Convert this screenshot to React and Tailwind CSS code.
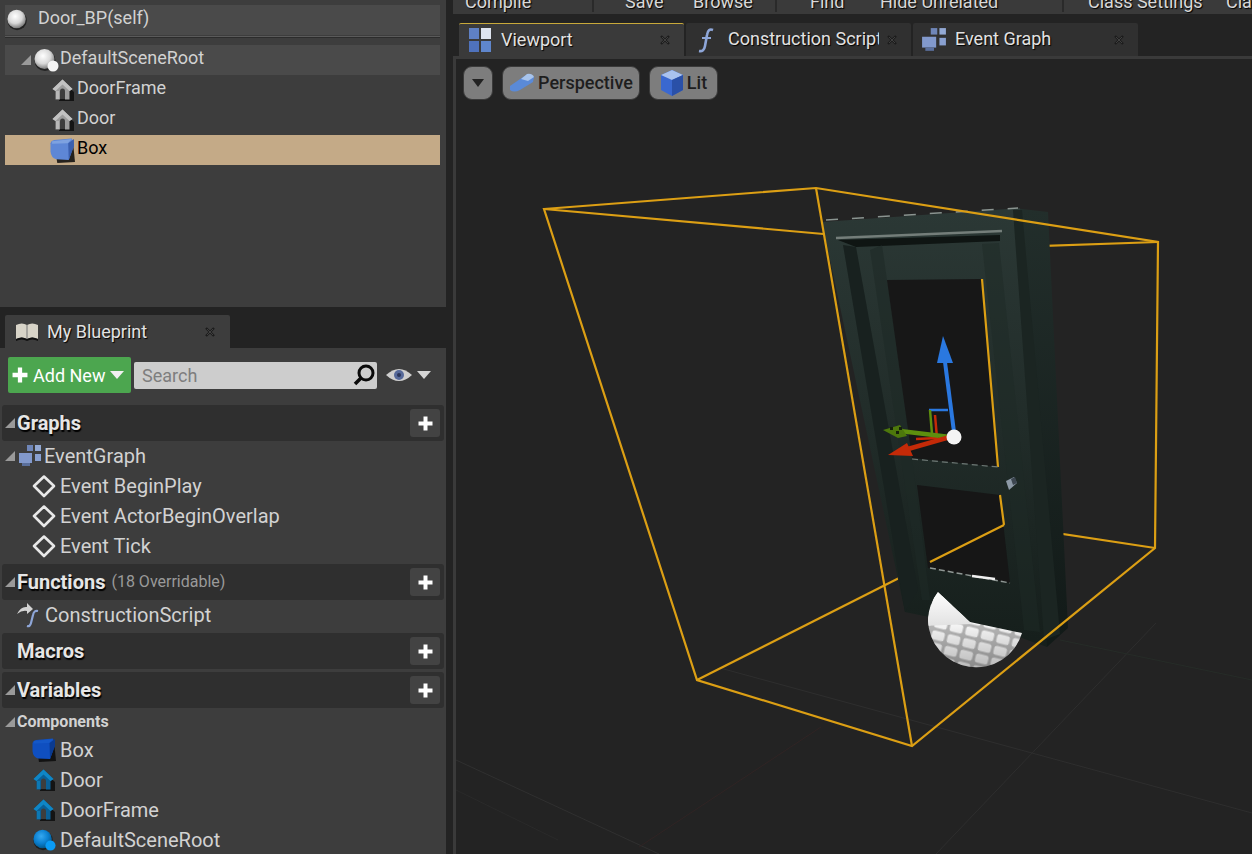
import React from "react";

const Caret = ({ className = "" }) => (
  <svg width="12" height="12" viewBox="0 0 12 12" className={"shrink-0 " + className}>
    <path d="M11 1 V11 H1 Z" fill="#9a9a9a" />
  </svg>
);

const Sphere = ({ size = 26, id = "sph", small = false, blue = false }) => (
  <svg width={size} height={size} viewBox="0 0 26 26" className="shrink-0">
    <defs>
      <radialGradient id={id} cx="0.42" cy="0.35" r="0.7">
        <stop offset="0" stopColor={blue ? "#35a8f0" : "#ffffff"} />
        <stop offset="0.55" stopColor={blue ? "#0a7fd0" : "#d8d8d8"} />
        <stop offset="1" stopColor={blue ? "#04527f" : "#6a6a6a"} />
      </radialGradient>
    </defs>
    <circle cx="12" cy="13.5" r="10.5" fill="#111" opacity="0.7" />
    <circle cx="11.5" cy="12" r="10" fill={`url(#${id})`} />
    {small && <circle cx="20" cy="19" r="5.5" fill={blue ? "#0a9bf5" : "#f4f4f4"} />}
  </svg>
);

const House = ({ blue = false }) => (
  <svg width="24" height="24" viewBox="0 0 24 24" className="shrink-0">
    <path d="M14 6 L23 14 V23 H8 V21 H17 Z" fill="#0a0a0a" opacity="0.8" />
    <path
      d="M11.5 1.5 L21.5 11 L18.5 13 V21.5 H14 V13.5 Q14 10.5 11.5 10.5 Q9 10.5 9 13.5 V21.5 H4.5 V13 L1.5 11 Z"
      fill={blue ? "#0a5f96" : "#9c9c9c"}
    />
    <path d="M11.5 1.5 L1.5 11 L4.5 13 L11.5 6.5 L18.5 13 L21.5 11 Z" fill={blue ? "#0f86c6" : "#c2c2c2"} />
    <path d="M5 13 H8 V21 H5 Z" fill={blue ? "#0d78b4" : "#b8b8b8"} />
  </svg>
);

const Cube = ({ size = 24, top = "#7ea2e0", left = "#5e87d6", right = "#3a5fae" }) => (
  <svg width={size} height={size} viewBox="0 0 24 24" className="shrink-0">
    <path d="M4 6 L22 3 L24 23 L7 24 Z" fill="#0a0a0a" opacity="0.85" />
    <path d="M0.5 5 Q1 2.5 4 2 L21 0.5 L23 7 L18 21 L6 20.5 Q1 19 0.5 13 Z" fill={left} />
    <path d="M17.5 5 L23 1 L23 8 L18 21 Z" fill={right} />
    <path d="M2 3 L21 1 L17 5 L2 5.5 Z" fill={top} />
  </svg>
);

const GraphIcon = ({ size = 24 }) => (
  <svg width={size} height={size} viewBox="0 0 24 24" className="shrink-0">
    <rect x="9" y="1" width="6" height="6" fill="#6f86b8" />
    <rect x="17" y="1" width="6" height="6" fill="#93a9d4" />
    <rect x="1" y="9" width="13" height="10" fill="#8299cc" />
    <rect x="17" y="10" width="6" height="7" fill="#89a0d0" />
    <rect x="4" y="19" width="8" height="3" fill="#5a6f9c" />
  </svg>
);

const EventIcon = () => (
  <svg width="24" height="24" viewBox="0 0 24 24" className="shrink-0">
    <path d="M12 2.5 L22 12 L12 22 L2 12 Z" fill="none" stroke="#e8e8e8" strokeWidth="2.6" strokeLinejoin="round" />
  </svg>
);

const Plus = ({ size = 15 }) => (
  <svg width={size} height={size} viewBox="0 0 15 15" className="shrink-0">
    <path d="M5.5 0.5 H9.5 V5.5 H14.5 V9.5 H9.5 V14.5 H5.5 V9.5 H0.5 V5.5 H5.5 Z" fill="#fff" />
  </svg>
);

const CloseX = () => (
  <svg width="10" height="10" viewBox="0 0 10 10" className="shrink-0">
    <path d="M1 1 L9 9 M9 1 L1 9" stroke="#1c1c1c" strokeWidth="2.4" />
    <path d="M2 2 L8 8 M8 2 L2 8" stroke="#4a4a4a" strokeWidth="0.8" />
  </svg>
);

const FuncGlyph = () => (
  <svg width="24" height="28" viewBox="0 0 24 28" className="shrink-0">
    <path d="M18 4 Q13 2 12 9 L10 20 Q9 26 4 25" fill="none" stroke="#8ea6d8" strokeWidth="2.6" />
    <path d="M7 12 H16" stroke="#8ea6d8" strokeWidth="2" />
  </svg>
);

function TreeRow({ icon, label, indent = 0, selected = false, highlight = false, gap = "gap-1", small = false }) {
  return (
    <div
      className={`flex h-[30px] items-center ${gap} ${small ? "text-[18px]" : "text-[20px]"} ${
        selected ? "bg-[#c4aa87] text-black" : highlight ? "bg-[#4a4a4a] text-[#d2d2d2]" : "text-[#d2d2d2]"
      }`}
      style={{ paddingLeft: indent }}
    >
      {icon}
      <span className={small ? "-translate-y-[3px]" : ""}>{label}</span>
    </div>
  );
}

function SectionHeader({ label, caret = true, extra, mt = "mt-[3px]" }) {
  return (
    <div className={`mx-[2px] ${mt} flex h-[36px] items-center rounded-[3px] bg-[#2f2f2f] pl-[2px] pr-[4px]`}>
      <div className="w-[13px]">{caret && <Caret />}</div>
      <span className="text-[20px] font-bold text-[#e6e6e6] [text-shadow:1px_2px_1px_#000]">{label}</span>
      {extra && <span className="ml-[6px] text-[16px] text-[#9a9a9a]">{extra}</span>}
      <button className="ml-auto flex h-[28px] w-[30px] items-center justify-center rounded-[3px] bg-[#434343]">
        <Plus />
      </button>
    </div>
  );
}

function Tab({ icon, label, active = false, clip = false }) {
  return (
    <div
      className={`flex h-[33px] w-[225px] items-center rounded-t-[2px] pr-[14px] ${
        active ? "border-t border-[#c8a93a] bg-[#3a3a3a]" : "bg-[#303030]"
      }`}
    >
      <div className="flex w-[42px] shrink-0 justify-center">{icon}</div>
      <span
        className={`-translate-y-[1px] text-[18px] text-[#e2e2e2] [text-shadow:1px_1px_1px_#000] ${
          clip ? "w-[151px] overflow-hidden whitespace-nowrap" : ""
        }`}
      >
        {label}
      </span>
      <div className="ml-auto">
        <CloseX />
      </div>
    </div>
  );
}

function ToolbarItem({ label, w }) {
  return (
    <span className={`${w} relative -top-[2px] shrink-0 whitespace-nowrap text-[18px] leading-[16px] text-[#d8d8d8] [text-shadow:1px_1px_1px_#000]`}>
      {label}
    </span>
  );
}

function Viewport() {
  const orange = "#dc9f14";
  return (
    <svg viewBox="456 59 796 795" className="absolute inset-0 h-full w-full">
      <defs>
        <pattern id="tiles" width="16" height="12" patternUnits="userSpaceOnUse" patternTransform="rotate(14)">
          <rect width="16" height="12" fill="#b4b4b4" />
          <rect x="1.5" y="1.5" width="13" height="9" rx="2.5" fill="#f4f4f4" />
        </pattern>
        <clipPath id="ball">
          <path d="M938 592 L970 622 L1022 633 A48 48 0 0 1 928 620 A48 48 0 0 1 938 592 Z" />
        </clipPath>
        <linearGradient id="ballTop" x1="0" y1="0" x2="0" y2="1">
          <stop offset="0" stopColor="#fff" />
          <stop offset="1" stopColor="#e2e2e2" />
        </linearGradient>
        <linearGradient id="ballShade" x1="0" y1="625" x2="0" y2="670" gradientUnits="userSpaceOnUse">
          <stop offset="0" stopColor="#000" stopOpacity="0" />
          <stop offset="1" stopColor="#000" stopOpacity="0.25" />
        </linearGradient>
        <linearGradient id="doorFace" x1="0" y1="210" x2="0" y2="640" gradientUnits="userSpaceOnUse">
          <stop offset="0" stopColor="#2b3835" />
          <stop offset="0.5" stopColor="#212c29" />
          <stop offset="1" stopColor="#161f1c" />
        </linearGradient>
        <linearGradient id="doorSide" x1="0" y1="210" x2="0" y2="640" gradientUnits="userSpaceOnUse">
          <stop offset="0" stopColor="#222e2b" />
          <stop offset="1" stopColor="#121a18" />
        </linearGradient>
      </defs>

      {/* floor grid */}
      <g strokeWidth="1" fill="none">
        <path d="M720 668 L1252 813" stroke="#2e2e2e" />
        <path d="M1156 623 L936 854" stroke="#2e2e2e" />
        <path d="M456 760 L659 854" stroke="#303030" />
        <path d="M456 790 L558 840" stroke="#2a2a2a" />
        <path d="M821 727 L639 847" stroke="#302424" />
        <path d="M1060 640 L1252 680" stroke="#262c28" />
      </g>

      {/* hidden edges of the box, behind the door */}
      <g stroke={orange} strokeWidth="2.2" fill="none">
        <path d="M544 209 L980 248 L1158 242" />
        <path d="M1004 525 L1155 548" />
        <path d="M1004 525 L697 680" />
      </g>

      {/* door frame */}
      <path d="M1013 208 L1048 212 L1068 628 L1047 647 L1010 620 Z" fill="url(#doorSide)" />
      <path d="M822 222 L1020 208 L1046 630 L1047 647 L1010 634 L905 612 Z" fill="url(#doorFace)" />
      <path d="M826 220 L1018 208" stroke="#8a9490" strokeWidth="1.5" strokeDasharray="12 14" />
      <path d="M836 238 L1002 231" stroke="#747e7a" strokeWidth="2.5" />
      <path d="M838 240 L1000 235 L1000 241 L856 247 Z" fill="#0f1513" />
      <path d="M843 245 L856 247 L918 590 L905 612 Z" fill="#18211f" />
      <path d="M882 245 L887 280 L912 458 L930 600 L922 600 L870 250 Z" fill="#1e2926" opacity="0.6" />
      <path d="M982 244 L999 243 L1040 632 L1024 630 Z" fill="#1e2926" opacity="0.5" />
      <path d="M1013 210 L1022 210 L1060 634 L1044 640 Z" fill="#1b2522" />

      {/* door windows */}
      <path d="M887 280 L982 279 L998 467 L912 458 Z" fill="#171717" />
      <path d="M917 485 L1000 495 L1010 583 L928 568 Z" fill="#161616" />
      <path d="M982 279 L998 467 M1000 495 L1004 525" stroke={orange} strokeWidth="2.2" fill="none" />
      <path d="M1004 525 L930 562" stroke={orange} strokeWidth="2.2" fill="none" />
      <path d="M930 568 L1010 583" stroke="#8f9794" strokeWidth="1.5" strokeDasharray="6 3" />
      <path d="M972 576 L995 579" stroke="#f0f0f0" strokeWidth="2.5" />
      <path d="M912 459 L998 467" stroke="#6f7976" strokeWidth="1.2" strokeDasharray="6 4" />
      <path d="M1006 481 L1014 477 L1017 483 L1009 490 Z" fill="#8d99a6" />
      <path d="M1011 479 L1015 477 L1017 483 L1013 485 Z" fill="#3d4650" />

      {/* sphere */}
      <g clipPath="url(#ball)">
        <rect x="920" y="585" width="110" height="90" fill="url(#tiles)" />
        <path d="M936 590 L972 624 L925 626 Z" fill="url(#ballTop)" />
        <rect x="920" y="625" width="110" height="50" fill="url(#ballShade)" />
      </g>

      {/* box edges in front */}
      <g stroke={orange} strokeWidth="2.2" fill="none" strokeLinejoin="miter">
        <path d="M544 209 L816 188 L1158 242 L1155 548 L912 746 L697 680 Z" />
        <path d="M816 188 L912 746" />
      </g>

      {/* gizmo */}
      <path d="M929 410 H948" stroke="#2a78e0" strokeWidth="2.5" />
      <path d="M930 410 L932 434" stroke="#5d8f0e" strokeWidth="2.5" />
      <path d="M935 415 L937 438 L916 439" stroke="#c42a08" strokeWidth="2.5" fill="none" />
      <path d="M945 362 L954 432" stroke="#2a78e0" strokeWidth="4" />
      <path d="M943 336 L953 363 L937 363 Z" fill="#2a78e0" />
      <path d="M950 437 L900 431" stroke="#5d8f0e" strokeWidth="4.5" />
      <path d="M883 430 L900 425 L907 436 L898 438 Z" fill="#4d780c" />
      <path d="M890 427 h3 v3 h-3z M896 431 h3 v3 h-3z M899 427 h3 v3 h-3z" fill="#15200a" />
      <path d="M950 437 L908 449" stroke="#c42a08" strokeWidth="4.5" />
      <path d="M888 455 L907 443 L913 456 Z" fill="#c42a08" />
      <circle cx="954" cy="437" r="7.5" fill="#f4f4f4" />
    </svg>
  );
}

function ViewButton({ icon, label, w }) {
  return (
    <div className={`flex h-[34px] ${w} shrink-0 items-center justify-center gap-[3px] rounded-[9px] border border-[#3a3a3a] bg-[#7d7d7d]`}>
      {icon}
      {label && <span className="-translate-y-[1px] text-[18px] font-medium text-[#1e1e1e]">{label}</span>}
    </div>
  );
}

export default function App() {
  return (
    <div className="flex h-[854px] w-[1252px] overflow-hidden bg-[#232323] font-[Roboto,sans-serif]">
      {/* left column */}
      <div className="flex w-[446px] shrink-0 flex-col">
        <div className="flex h-[307px] shrink-0 flex-col bg-[#3d3d3d] pl-[5px] pr-[6px] pt-[5px]">
          <div className="flex h-[30px] items-center bg-[#4a4a4a] pl-[1px] text-[18px] text-[#d2d2d2]">
            <Sphere id="sphA" size={24} />
            <span className="ml-[8px] -translate-y-[3px]">Door_BP(self)</span>
          </div>
          <div className="mb-[7px] mt-[1px] h-[2px] border-b border-[#2c2c2c] bg-[#5a5a5a]" />
          <TreeRow
            small
            highlight
            indent={15}
            gap="gap-[1px]"
            icon={
              <>
                <Caret />
                <Sphere id="sphB" size={26} small />
              </>
            }
            label="DefaultSceneRoot"
          />
          <TreeRow small indent={46} gap="gap-[2px]" icon={<House />} label="DoorFrame" />
          <TreeRow small indent={46} gap="gap-[2px]" icon={<House />} label="Door" />
          <TreeRow small selected indent={45} gap="gap-[2px]" icon={<Cube size={25} />} label="Box" />
        </div>

        <div className="flex h-[41px] shrink-0 items-end pl-[5px]">
          <div className="flex h-[33px] w-[225px] items-center rounded-t-[2px] bg-[#3d3d3d] pl-[10px] pr-[15px]">
            <svg width="24" height="22" viewBox="0 0 24 22" className="shrink-0">
              <path d="M1 4 Q7 1 12 4 Q17 1 23 4 V18 Q17 15 12 18 Q7 15 1 18 Z" fill="#d8d4c8" />
              <path d="M12 4 V18" stroke="#777" strokeWidth="1" />
              <path d="M1 18 Q7 15 12 18 Q17 15 23 18 V20 Q17 17 12 20 Q7 17 1 20 Z" fill="#111" />
            </svg>
            <span className="ml-[8px] text-[18px] text-[#e2e2e2] [text-shadow:1px_1px_1px_#000]">My Blueprint</span>
            <div className="ml-auto">
              <CloseX />
            </div>
          </div>
        </div>

        <div className="flex flex-1 flex-col bg-[#3d3d3d]">
          <div className="flex h-[57px] shrink-0 items-center pb-[3px] pl-[8px]">
            <button className="flex h-[36px] w-[123px] items-center rounded-[2px] bg-[#4ca64f] pl-[4px] text-[18px] text-white">
              <Plus size={16} />
              <span className="ml-[5px]">Add New</span>
              <svg width="14" height="8" viewBox="0 0 14 8" className="ml-[5px]">
                <path d="M0 0 H14 L7 8 Z" fill="#f0f0f0" />
              </svg>
            </button>
            <div className="ml-[3px] flex h-[27px] w-[243px] items-center justify-between rounded-[2px] bg-[#cdcdcd] pl-[8px] pr-[1px] text-[18px] text-[#7e7e7e]">
              <span>Search</span>
              <svg width="24" height="24" viewBox="0 0 24 24">
                <circle cx="14" cy="10" r="7" fill="none" stroke="#0a0a0a" strokeWidth="3" />
                <path d="M9 15 L3 21" stroke="#0a0a0a" strokeWidth="3.5" />
              </svg>
            </div>
            <svg width="28" height="16" viewBox="0 0 28 16" className="ml-[8px]">
              <path d="M1 8 Q14 -4 27 8 Q14 20 1 8 Z" fill="#cfcfcf" />
              <circle cx="14" cy="8" r="5" fill="#56699a" />
              <circle cx="14" cy="8" r="2" fill="#2b3558" />
            </svg>
            <svg width="14" height="8" viewBox="0 0 14 8" className="ml-[4px]">
              <path d="M0 0 H14 L7 8 Z" fill="#d6d6d6" />
            </svg>
          </div>

          <SectionHeader label="Graphs" mt="mt-0" />
          <TreeRow
            indent={4}
            gap="gap-[2px]"
            icon={
              <>
                <Caret />
                <GraphIcon />
              </>
            }
            label="EventGraph"
          />
          <TreeRow indent={32} icon={<EventIcon />} label="Event BeginPlay" />
          <TreeRow indent={32} icon={<EventIcon />} label="Event ActorBeginOverlap" />
          <TreeRow indent={32} icon={<EventIcon />} label="Event Tick" />

          <SectionHeader label="Functions" extra="(18 Overridable)" />
          <TreeRow
            indent={17}
            gap="gap-[4px]"
            icon={
              <svg width="24" height="26" viewBox="0 0 24 26" className="shrink-0">
                <path d="M0 12 Q4 4 10 5 V1 L16 7 L10 12 V9 Q5 8 0 12 Z" fill="#d4d4d4" />
                <path d="M21 9 Q17 8 16 13 L14 21 Q13 25 10 24" fill="none" stroke="#8ea6d8" strokeWidth="2.2" />
              </svg>
            }
            label="ConstructionScript"
          />
          <SectionHeader label="Macros" caret={false} />
          <SectionHeader label="Variables" />
          <div className="flex h-[27px] shrink-0 items-center pl-[4px]">
            <Caret />
            <span className="ml-[1px] text-[16px] font-bold text-[#d2d2d2]">Components</span>
          </div>
          <TreeRow indent={32} icon={<Cube size={24} top="#1458c8" left="#0f4fc0" right="#0a3a90" />} label="Box" />
          <TreeRow indent={32} icon={<House blue />} label="Door" />
          <TreeRow indent={32} icon={<House blue />} label="DoorFrame" />
          <TreeRow indent={32} icon={<Sphere id="sphC" size={24} small blue />} label="DefaultSceneRoot" />
        </div>
      </div>

      {/* right column */}
      <div className="flex min-w-0 flex-1 flex-col pl-[7px]">
        <div className="flex h-[14px] shrink-0 items-start overflow-hidden bg-[#3a3a3a]">
          <div className="flex h-[12px] w-[141px] shrink-0 items-end border-r-2 border-[#2a2a2a] pl-[12px]">
            <ToolbarItem label="Compile" w="w-[100px]" />
          </div>
          <div className="flex h-[12px] w-[183px] shrink-0 items-end border-r-2 border-[#2a2a2a] pl-[31px]">
            <ToolbarItem label="Save" w="w-[68px]" />
            <ToolbarItem label="Browse" w="w-[80px]" />
          </div>
          <div className="flex h-[12px] w-[287px] shrink-0 items-end border-r-2 border-[#2a2a2a] pl-[33px]">
            <ToolbarItem label="Find" w="w-[70px]" />
            <ToolbarItem label="Hide Unrelated" w="w-[160px]" />
          </div>
          <div className="flex h-[12px] items-end pl-[24px]">
            <ToolbarItem label="Class Settings" w="w-[138px]" />
            <ToolbarItem label="Class Defaults" w="w-[120px]" />
          </div>
        </div>

        <div className="flex h-[42px] shrink-0 items-end gap-[2px] pl-[6px]">
          <Tab
            active
            icon={
              <svg width="24" height="26" viewBox="0 0 24 26">
                <rect x="1" y="1" width="10" height="11" fill="#5f80c4" />
                <rect x="13" y="1" width="10" height="11" fill="#dfe5f0" />
                <rect x="1" y="14" width="10" height="11" fill="#4f72bc" />
                <rect x="13" y="14" width="10" height="11" fill="#5f86cc" />
              </svg>
            }
            label="Viewport"
          />
          <Tab icon={<FuncGlyph />} label="Construction Script" clip />
          <Tab icon={<GraphIcon size={26} />} label="Event Graph" />
        </div>

        <div className="relative flex-1 border-l-[3px] border-t-[3px] border-[#3a3a3a] bg-[#232323]">
          <Viewport />
          <div className="relative flex items-center gap-[9px] pl-[7px] pt-[7px]">
            <ViewButton
              w="w-[30px]"
              icon={
                <svg width="12" height="8" viewBox="0 0 12 8">
                  <path d="M0 0 H12 L6 8 Z" fill="#222" />
                </svg>
              }
            />
            <ViewButton
              w="w-[138px]"
              label="Perspective"
              icon={
                <svg width="26" height="22" viewBox="0 0 26 22">
                  <path d="M1 14 L14 5 Q20 1 25 5 L24 10 L11 18 Q5 21 1 18 Z" fill="#5a8ad8" />
                  <path d="M12 7 L18 2 Q23 1 25 5 L19 9 Z" fill="#a8c4ec" />
                </svg>
              }
            />
            <ViewButton
              w="w-[69px]"
              label="Lit"
              icon={
                <svg width="24" height="28" viewBox="0 0 24 28">
                  <path d="M12 1 L23 6 V21 L12 27 L1 21 V6 Z" fill="#3a68d0" />
                  <path d="M12 1 L23 6 L12 11 L1 6 Z" fill="#a9c2ee" />
                  <path d="M12 11 L23 6 V21 L12 27 Z" fill="#2a50a8" />
                </svg>
              }
            />
          </div>
        </div>
      </div>
    </div>
  );
}
